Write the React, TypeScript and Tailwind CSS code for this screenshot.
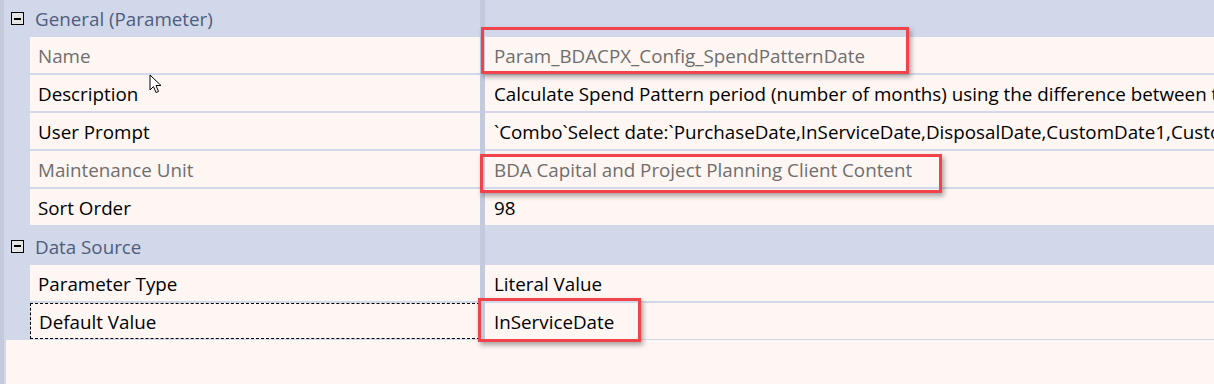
import React from "react";

const font = { fontFamily: '"Open Sans", "Noto Sans", sans-serif' };

function Toggle() {
  return (
    <div className="w-[13px] h-[13px] border-[1.5px] border-black bg-[#e4e4e4] flex items-center justify-center">
      <div className="w-[7px] h-[2px] bg-black" />
    </div>
  );
}

function Category({ label, h }: { label: string; h: string }) {
  return (
    <div className={`flex ${h}`}>
      <div className="w-[476px] flex items-center pl-[7px]">
        <Toggle />
        <span className="ml-[11px] pt-[2px] text-[#4e5c7e]">{label}</span>
      </div>
      <div className="w-[5px] bg-[#c3cade]" />
      <div className="flex-1" />
    </div>
  );
}

function Row({
  label,
  value,
  gray,
  dashed,
}: {
  label: string;
  value: string;
  gray?: boolean;
  dashed?: boolean;
}) {
  const color = gray ? "text-[#6e6e6e]" : "text-black";
  return (
    <div className="flex h-[38px]">
      <div className="w-[26px]" />
      <div className="w-[450px] border-b-2 border-[#d1d8ea] bg-[#fef6f3] flex">
        <div
          className={`flex-1 flex items-center pl-[8px] pt-[2px] ${color} ${
            dashed ? "border border-dashed border-black" : ""
          }`}
        >
          {label}
        </div>
      </div>
      <div className="w-[5px] bg-[#c3cade]" />
      <div
        className={`flex-1 min-w-0 border-b-2 border-[#d1d8ea] bg-[#fef6f3] flex items-center pl-[9px] pt-[2px] whitespace-nowrap overflow-hidden ${color}`}
      >
        {value}
      </div>
    </div>
  );
}

function Cursor() {
  return (
    <svg
      className="absolute left-[149px] top-[74px]"
      width="14"
      height="21"
      viewBox="0 0 14 21"
    >
      <path
        d="M1 1 L1 16 L4.5 12.5 L7 18.5 L9.5 17.5 L7 11.5 L12 11.5 Z"
        fill="white"
        stroke="black"
        strokeWidth="1"
        strokeLinejoin="miter"
      />
    </svg>
  );
}

function RedBox({ cls }: { cls: string }) {
  return (
    <div
      className={`absolute border-[3px] border-[#f2434b] shadow-[2px_3px_5px_rgba(0,0,0,0.35)] ${cls}`}
    />
  );
}

export default function App() {
  return (
    <div
      className="relative w-[1214px] h-[384px] bg-[#c3cade] pl-[4px] overflow-hidden text-[18.8px]"
      style={font}
    >
      <div className="h-full bg-[#d1d8ea] flex flex-col">
        <Category label="General (Parameter)" h="h-[37px]" />
        <Row label="Name" value="Param_BDACPX_Config_SpendPatternDate" gray />
        <Row
          label="Description"
          value="Calculate Spend Pattern period (number of months) using the difference between  the selected dates"
        />
        <Row
          label="User Prompt"
          value="`Combo`Select date:`PurchaseDate,InServiceDate,DisposalDate,CustomDate1,CustomDate2"
        />
        <Row
          label="Maintenance Unit"
          value="BDA Capital and Project Planning Client Content"
          gray
        />
        <Row label="Sort Order" value="98" />
        <Category label="Data Source" h="h-[38px]" />
        <Row label="Parameter Type" value="Literal Value" />
        <Row label="Default Value" value="InServiceDate" dashed />
        <div className="flex-1 ml-[2px] -mt-[1px] bg-[#fef6f3]" />
      </div>
      <RedBox cls="left-[481px] top-[27px] w-[428px] h-[47px]" />
      <RedBox cls="left-[480px] top-[154px] w-[462px] h-[39px]" />
      <RedBox cls="left-[478px] top-[298px] w-[163px] h-[44px]" />
      <Cursor />
    </div>
  );
}
